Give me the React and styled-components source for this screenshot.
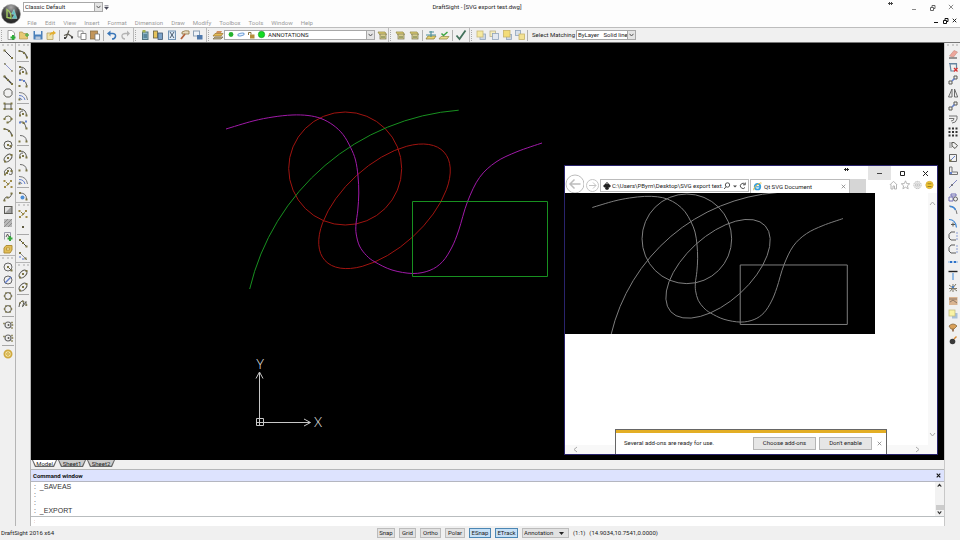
import React from 'react'
import styled, { createGlobalStyle, css } from 'styled-components'

const GlobalStyle = createGlobalStyle`
  * { box-sizing: border-box; }
  body {
    margin: 0;
    background: #fdfdfd;
    color: #1c1c1c;
    font: 6px/8px Roboto, "Noto Sans", sans-serif;
  }
  button, select, input { font: inherit; color: inherit; margin: 0; }
`

/* ---------- shared parts ---------- */

const Page = styled.div`
  min-height: 100vh;
  display: flex;
  flex-direction: column;
`

const plainButton = css`
  display: flex;
  align-items: center;
  justify-content: center;
  flex: none;
  padding: 0;
  border: 0;
  background: none;
`

const ToolButton = styled.button`
  ${plainButton}
  width: 13px;
  height: 13px;
`

const Select = styled.select`
  flex: 1;
  min-width: 0;
  height: 100%;
  padding: 0;
  border: 0;
  outline: 0;
  appearance: none;
  background: none;
`

const Combo = styled.div`
  display: flex;
  align-items: center;
  flex: none;
  width: ${p => p.$width}px;
  height: 10px;
  padding-left: ${p => p.$pad || 1}px;
  border: 1px solid #a8a8a8;
  background: #fff;
`

const ComboArrow = styled.span`
  display: flex;
  align-items: center;
  justify-content: center;
  width: 8px;
  height: 100%;
  border-left: 1px solid #a8a8a8;
  background: #e4e4e4;
`

const Arrow = () => (
  <ComboArrow>
    <svg width="5" height="4" viewBox="0 0 5 4"><path d="M.5 .8 2.5 3 4.5 .8" fill="none" stroke="#555" /></svg>
  </ComboArrow>
)

/* ---------- icons ---------- */

const dark = '#5a5a54'
const olive = '#7d7644'
const blue = '#6480cc'

const Dots = ({ at, color = olive, size = 2 }) => at.map(([x, y]) => (
  <rect key={`${x}-${y}`} x={x - size / 2} y={y - size / 2} width={size} height={size} fill={color} />
))
const Stroke = ({ d, color = dark, width = 1 }) => <path d={d} fill="none" stroke={color} strokeWidth={width} />

const icons = {
  line: <><Stroke d="M2 2 10 10" color="#3c3c3c" /><Dots at={[[2.5, 2.5], [10, 10]]} /></>,
  infinite: <><Stroke d="M2 2 10 10" color="#8f97cc" /><Dots at={[[3, 3], [10, 10]]} size={1.5} /></>,
  ray: <><Stroke d="M2 2 10 10" color="#3c3c3c" width={1.2} /><Dots at={[[2.5, 2.5], [6, 6], [10, 10]]} /></>,
  polygon: <Stroke d="M4.2 2h3.6L10 4.4v3.2L7.8 10H4.2L2 7.6V4.4z" />,
  rect: <><Stroke d="M3 4h6v5H3z" /><Dots at={[[2.5, 3.5], [9.5, 9], [2.5, 9], [9.5, 3.5]]} /></>,
  hook: <><Stroke d="M2.500 6Q3 2.500 6.500 3q3 .5 3 3T6 9.500" color="#66664a" /><Dots at={[[2.5, 6], [9.5, 6], [5.5, 9.5]]} /></>,
  arc: <><Stroke d="M2 3q6.500 0 8 7" width={1.2} /><Dots at={[[2.5, 3], [7, 5], [10, 9.5]]} /></>,
  circle: <><circle cx="6" cy="6" r="4" fill="none" stroke={dark} /><Dots at={[[6, 6], [8.5, 7]]} /></>,
  ellipse: <><ellipse cx="6" cy="6" rx="4.6" ry="2.8" transform="rotate(-45 6 6)" fill="none" stroke={dark} /><Dots at={[[6, 6], [3, 9.5], [9.5, 3]]} /></>,
  ellipseArc: <><Stroke d="M3 9.500Q1 6 5 3.500T10 6 7 9" /><Dots at={[[3, 9.5], [6, 6], [9.5, 6], [5, 8]]} /></>,
  points: <><Dots at={[[2.5, 3], [6, 6], [9.5, 9], [9, 3], [3, 9]]} color="#a08c48" /><Dots at={[[4.5, 4.5], [7.5, 5], [5, 7.5]]} size={1} /></>,
  spline: <><Stroke d="M2 10Q3 5 5.500 6.500T10 2" /><Dots at={[[2.5, 9.5], [5.5, 6.5], [9.5, 2.5]]} /></>,
  gradient: <><rect x="2" y="2" width="8" height="8" fill="#a0a0a0" /><path d="M2 2h8L2 10z" fill="#e0e0e0" /><Stroke d="M2.500 2v8M2 9.500h8.500M10 2v8M2 2.500h8" /></>,
  hatch: <><rect x="2" y="2" width="8" height="8" fill="#b8b8b8" /><Stroke d="M2 6 6 2M2 10 10 2M6 10l4-4" color="#8d8d8d" /></>,
  note: <><Stroke d="M2.500 9.500v-7h6v4" color="#99a" /><Stroke d="M4 7 5.500 4 7 7" /><Stroke d="M8 6v5M5.500 8.500h5" color="#35a53b" width={2} /></>,
  region: <><path d="M2 5l2-2.500h6V7L8 10H2z" fill="#e2bd56" stroke="#b18f38" /><rect x="4.500" y="5" width="3" height="2" fill="#f8e9b0" stroke="#a68228" strokeWidth=".6" /></>,
  circlePt: <><circle cx="6" cy="6" r="4" fill="none" stroke="#666" /><Stroke d="M6 6 9.500 9.500" /><Dots at={[[6, 6], [9.5, 9.5]]} /></>,
  circleDiag: <><circle cx="6" cy="6" r="4" fill="none" stroke="#666" /><Stroke d="M3 9 9 3" color={blue} width={1.4} /></>,
  ring: <><circle cx="6" cy="6" r="3.400" fill="none" stroke={dark} /><Dots at={[[4, 3], [8, 3], [4, 9], [8, 9], [2.5, 6], [9.5, 6]]} size={1.5} /></>,
  gear: <><circle cx="6" cy="6" r="3" fill="none" stroke="#6b6b6b" strokeWidth="1.200" /><circle cx="6.500" cy="6" r="1" fill={dark} /><Dots at={[[2, 4.5], [10, 3.5], [10, 9], [10.5, 6]]} size={1.5} /></>,
  donut: <><circle cx="6" cy="6" r="3.600" fill="#f4e5a8" stroke="#cfa93f" strokeWidth="1.800" /><circle cx="6" cy="6" r="1.300" fill="none" stroke="#cda331" /></>,
  arc3: <><Stroke d="M3 3Q9.500 3 9.500 10M3 9Q2 5 6 5" /><Dots at={[[3, 3], [9.5, 9.5], [3, 9.5], [6, 8]]} /></>,
  arcBlue: <><Stroke d="M2.500 3h3q4 1.500 4.500 6" /><Dots at={[[3, 3], [7, 4]]} color={blue} /><Dots at={[[2.5, 9], [9.5, 9.5]]} /></>,
  arcDouble: <><Stroke d="M2 2.500q7.500 0 8.500 7.500" color="#808080" /><Stroke d="M2 5.500q5 0 6 4.500M2 8q2.500 0 3 2" color={blue} /><Dots at={[[2.5, 9.5]]} /></>,
  arcTan: <><Stroke d="M3 3h3.500q2 3 3 7" /><Dots at={[[3, 3.5], [9, 2.5]]} color={blue} /><Dots at={[[6.5, 4], [9.5, 9.5]]} /></>,
  arcOpen: <><Stroke d="M3 3.500Q9 3.500 9.500 9" color="#6b6b6b" /><Dots at={[[2.5, 9.5], [9.5, 9.5]]} /></>,
  arcFill: <><Stroke d="M3 3Q9.500 3 9.500 9" color="#6b6b6b" /><circle cx="5.500" cy="7.500" r="2" fill="#4d8fd8" /><Dots at={[[3, 3], [9.5, 9.5]]} /></>,
  point: <Dots at={[[6, 6]]} color="#5e5a40" />,
  diag: <><Stroke d="M2.500 2.500 10 10" color="#3c3c3c" /><Dots at={[[3, 3], [6, 6], [9.5, 9.5]]} /></>,
  diagBlue: <><Stroke d="M2.500 2.500 10 10" color="#8f8f8f" /><Dots at={[[3, 3], [8.5, 8.5]]} /><Dots at={[[3, 7], [6, 9]]} color={blue} size={1.5} /></>,
  curveN: <><Stroke d="M2 10Q2 5 5 4T6 8 9 4.500V9" /><Dots at={[[3, 6], [6, 4.5], [9.5, 8]]} size={1.5} /></>,

  eraser: <><path d="M2.500 8 7 2.500 10.500 4 6.500 9z" fill="#eda79c" stroke="#c58a80" strokeWidth=".6" /><Stroke d="M2 10h8" color="#3c3c3c" /></>,
  discard: <><Stroke d="M2.500 3h7v5M3 3l1 7h3M2 2.500h8" color="#6585a0" width={1.2} /><Stroke d="M7 7l3.500 3.500M10.500 7 7 10.500" color="#d43030" width={1.3} /></>,
  copy: <><Stroke d="M2 7h3v3H2zM7 2h3v3H7z" /><Stroke d="M5 7 7.500 4.500" color={blue} width={1.6} /></>,
  mirror: <Stroke d="M5 2v8H1.500zM7.500 2v8h3.200z" color="#6b6b6b" />,
  offset: <Stroke d="M2 3h8v3q-1 4-5 4M2 5.500h5q0 2.500-3 2.500" color="#757575" />,
  pattern: <Dots at={[[2.5, 2.5], [6, 2.5], [9.5, 2.5], [2.5, 6], [6, 6], [9.5, 6], [2.5, 9.5], [6, 9.5], [9.5, 9.5]]} color="#333" />,
  rotate: <><Stroke d="M2 4h3M2 6h2M2 8h3" color="#888" /><Stroke d="M5 3.500h2L10.500 6.500 8 9.500 5 7z" /></>,
  scale: <><Stroke d="M2.500 2.500h7v7h-7z" color="#666" /><Stroke d="M3.500 8.500 8 4" color={blue} /><Dots at={[[3.5, 8.5]]} /></>,
  stretch: <><Stroke d="M2.500 2v7.500h8V7H5V2z" color="#757575" /><Dots at={[[4, 8]]} color={blue} /></>,
  thinLine: <><Stroke d="M2 10 10 2" color="#8186c0" /><Dots at={[[5, 7]]} color="#444" size={1.5} /></>,
  explode: <><Stroke d="M4 3h5v2H4zM2 6h4v4H2z" color="#6f6db4" /><circle cx="8.500" cy="8" r="2" fill="none" stroke="#666" /></>,
  trim: <><Stroke d="M2 2q7 0 8 8" color="#777" /><Stroke d="M3 2.500q4 0 5.500 3.500" color="#3d86d6" width={1.5} /></>,
  trimPt: <><Stroke d="M2 2.500q6.500 0 7.500 8" color="#3d86d6" width={1.2} /><Stroke d="M6 5.500v4M4 7.500h4" /></>,
  chamfer: <><Stroke d="M8 2H4L2 4.500V8l2 2h5" color="#5b5b5b" /><Dots at={[[10, 3], [10, 6], [10, 9]]} color={blue} size={1.2} /></>,
  split: <><Stroke d="M1 6h10" color="#7fb0e6" /><Dots at={[[4, 6], [8, 6]]} color="#2e71c8" /></>,
  weld: <><Stroke d="M1.500 2.500h9" color="#222" width={1.4} /><Stroke d="M6 4v7" color="#6ba4e0" width={1.4} /></>,
  burst: <><Stroke d="M2 3l8 6M3 9.500 9 2M6 2v8M2 6.500h8" color="#7c7868" /><Dots at={[[6, 5]]} color="#4a7fc0" /></>,
  image: <><rect x="2" y="2" width="8.500" height="8" fill="#d9b491" /><Stroke d="M2 4h8M3 7l3-2 4 3" color="#8b7665" /></>,
  order: <><rect x="5" y="5" width="5.500" height="5.500" fill="#a8bfd8" /><rect x="2" y="2" width="6" height="6" fill="#f9f3a4" stroke="#c5be80" strokeWidth=".8" /></>,
  brush: <><path d="M2 5q4-4 8 0L7 8H4z" fill="#d8a05a" stroke="#8a6a3c" strokeWidth=".8" /><Stroke d="M6 8v2.500" color="#8b5f3a" width={1.6} /></>,
  bomb: <><circle cx="5.500" cy="7.500" r="2.800" fill="#3a3a3a" /><Stroke d="M7 5 9.500 2.500" color="#d88a35" width={1.5} /></>,

  newFile: <><path d="M3 1.500h4L9.500 4v6.500H3z" fill="#fff" stroke="#a0a0a0" /><Stroke d="M8 6v5M5.500 8.500h5" color="#2fae3b" width={2} /></>,
  open: <><path d="M1.500 3h3l1 1.500h4V10h-8z" fill="#e7c974" stroke="#b89d56" strokeWidth=".8" /><path d="M7 6h4M9 4v4" stroke="#5fae50" strokeWidth="1.400" /></>,
  save: <><rect x="1.500" y="2" width="9" height="8.500" fill="#4a80ba" /><rect x="3" y="2" width="6" height="3.500" fill="#e9f0f8" /><rect x="3.500" y="7.500" width="5" height="3" fill="#b9c8da" /></>,
  exportFile: <><path d="M2 4h6v6.500H2z" fill="#f0e3ac" stroke="#b5a060" strokeWidth=".8" /><path d="M4.500 7q0-4 3.500-4V1.500L11 4 8 6V5q-2 0-3.500 2" fill="#e3ae2e" /></>,
  cut: <><Stroke d="M7 1.500 4 9M2 6.500 6 5l5 3.500" color="#5c5a50" width={1.2} /><Dots at={[[3, 9], [10, 8.5]]} color="#444" /></>,
  copyDoc: <><path d="M2 2h5v6H2z" fill="#fff" stroke="#999" /><path d="M5 4.500h5v6H5z" fill="#fff" stroke="#888" /></>,
  paste: <><rect x="1.500" y="2" width="7" height="8" fill="#c2955a" stroke="#8a7048" strokeWidth=".8" /><path d="M6 5h4.500v6H6z" fill="#fff" stroke="#777" strokeWidth=".8" /></>,
  undo: <><Stroke d="M3 4.500h4q3 .5 2.500 3T6 10" color="#3a76b8" width={1.5} /><path d="M1 4.500 4.500 1.500v6z" fill="#3a76b8" /></>,
  redo: <><Stroke d="M9 4.500H6q-3.500.5-3 3T6 10" color="#b3b3b3" width={1.3} /><path d="M11 4.500 8 1.500v6z" fill="#b3b3b3" /></>,
  props: <><rect x="3.500" y="3" width="5.500" height="7.500" fill="#8fb7c8" stroke="#527480" /><rect x="3.500" y="1" width="3" height="2.500" fill="#a8b350" /><Stroke d="M4.500 6h3.500M4.500 8h3.500" color="#265a75" /></>,
  palettes: <><rect x="1.500" y="2" width="4" height="7" fill="#e5c25b" stroke="#67603f" strokeWidth=".8" /><rect x="6" y="4" width="4.500" height="6.500" fill="#7ca2c8" stroke="#415770" strokeWidth=".8" /></>,
  design: <><rect x="2.500" y="2" width="7" height="8.500" fill="#dce9f5" stroke="#7394b4" /><Stroke d="M4 3l4 6M8 3 4 9" color="#4b5c70" /></>,
  painter: <><path d="M3 3q3-2 7-1v3H3z" fill="#e8dcc0" stroke="#8b7344" strokeWidth=".8" /><Stroke d="M2 10 6 5" color="#b4623a" width={1.8} /></>,
  refs: <><rect x="1.500" y="2" width="6" height="5" fill="#eef3f9" stroke="#8da1b6" /><rect x="5" y="6" width="5.500" height="4.500" fill="#4f79ac" /></>,
  layers: <><path d="M1 7h8l2-2.500H3z" fill="#e3ba56" stroke="#9a7326" strokeWidth=".7" /><path d="M1 10h8l2-2H3z" fill="#bfb28a" stroke="#77694a" strokeWidth=".7" /><path d="M4 4h5l1-2H5z" fill="#cf8f5d" /></>,
  layerA: <><path d="M2 3h7l1.500 2.500H3.500z" fill="#e4d371" stroke="#948b4b" strokeWidth=".8" /><rect x="4" y="5" width="6" height="5" fill="#d8cd8e" stroke="#85805c" strokeWidth=".8" /><Stroke d="M5 8h4" color="#6b7a45" /></>,
  layerB: <><path d="M1 10h8l2-3H3z" fill="#e8d36b" stroke="#8d8142" strokeWidth=".8" /><Stroke d="M1 6h10M4 3h5M6 2v6" color="#4f929a" width={1.2} /></>,
  layerC: <><path d="M1 10h8l2-2.500H3z" fill="#e8dc8b" stroke="#9d9152" strokeWidth=".8" /><Stroke d="M3.500 4.500 5.500 6.500 9.500 3" color="#3fa644" width={1.5} /></>,
  check: <Stroke d="M1.500 6.500 4.500 10 10.500 1.500" color="#42715b" width={1.8} />,
  orderA: <><rect x="5" y="5" width="5.500" height="5.500" fill="#ccd6e4" stroke="#8fa3bc" strokeWidth=".8" /><rect x="2" y="2" width="6" height="6" fill="#f6e9a0" stroke="#c8b878" strokeWidth=".8" /></>,
  orderB: <><rect x="2" y="2" width="5.500" height="5.500" fill="#f6eebd" stroke="#b9b08a" strokeWidth=".8" /><rect x="4.500" y="4.500" width="6" height="6" fill="#e2e8f0" stroke="#8fa3bc" strokeWidth=".8" /></>,
  orderC: <><rect x="5.500" y="5.500" width="5" height="5" fill="#ccd6e4" stroke="#8fa3bc" strokeWidth=".8" /><rect x="2.500" y="1.500" width="6.500" height="6.500" fill="#f3dc78" stroke="#c8b468" strokeWidth=".8" /></>,
  orderD: <><rect x="1.500" y="1.500" width="5" height="5" fill="#d8e0ea" stroke="#8fa3bc" strokeWidth=".8" /><rect x="5" y="5" width="5.500" height="5.500" fill="#f3e294" stroke="#c8b468" strokeWidth=".8" /></>,
}

const Icon = ({ name }) => <svg width="12" height="12" viewBox="0 0 12 12">{icons[name]}</svg>

const Tools = ({ names }) => names.map((name, i) => {
  if (name === '|') return <Separator key={i} />
  return <ToolButton key={i} type="button" aria-label={name}><Icon name={name} /></ToolButton>
})

const glyphs = {
  min: 'M1 5.500h4',
  dash: 'M1 3.500h5',
  max: 'M1.500 1.500h4v4h-4z',
  restore: 'M1.500 3.500h3v3h-3zM3 3.500v-2h3v3H4.500',
  close: 'M1 1 6 6M6 1 1 6',
  resize: 'M1 3.500h5M2.500 2v3M4.500 2v3',
  left: 'M5 1 2 3.500 5 6',
  right: 'M2 1 5 3.500 2 6',
  up: 'M1 5 3.500 2 6 5',
  down: 'M1 2 3.500 5 6 2',
}

const Glyph = ({ name, size = 7, color = '#333', width = 1 }) => (
  <svg width={size} height={size} viewBox="0 0 7 7">
    <path d={glyphs[name]} fill="none" stroke={color} strokeWidth={width} />
  </svg>
)

/* ---------- header ---------- */

const Header = styled.header`
  display: grid;
  grid-template-columns: 22px 1fr;
  grid-template-rows: 14px 13px;
  background: #fdfdfd;
`

const LogoButton = styled.button`
  ${plainButton}
  grid-row: span 2;
`

const TitleRow = styled.div`
  display: flex;
  align-items: center;
  padding-left: 1px;
`

const Title = styled.h1`
  flex: 1;
  margin: 0;
  padding-right: 42px;
  font-size: 6px;
  font-weight: 400;
  text-align: center;
`

const ResizeMark = styled.span`
  display: flex;
  align-self: flex-start;
  margin-right: ${p => p.$gap}px;
`

const WindowButtons = styled.div`
  display: flex;
  align-items: center;
  gap: ${p => p.$gap}px;
  padding-right: ${p => p.$end}px;
`

const WinButton = styled.button`
  ${plainButton}
  width: 7px;
  height: 8px;
`

const MenuRow = styled.nav`
  display: flex;
  align-items: center;
  justify-content: space-between;
`

const Menu = styled.div`
  display: flex;
  gap: 8px;
  padding: 4px 0 0 5px;
`

const MenuItem = styled.button`
  ${plainButton}
  min-width: 10px;
  color: #9a9a9a;
`

const Toolbar = styled.div`
  display: flex;
  height: 16px;
  border-top: 1px solid #bdbdbd;
  border-bottom: 1px solid #777;
  background: #f0f0f0;
`

const ToolGroup = styled.div`
  display: flex;
  align-items: center;
  justify-content: space-between;
  width: ${p => p.$width}px;
  padding-right: 1px;
  border-right: ${p => (p.$last ? 0 : 1)}px solid #bbb;
`

const Grip = styled.span`
  flex: none;
  width: 2px;
  height: 11px;
  margin: 0 1px;
  border-left: 1px dotted #aaa;
`

const Separator = styled.span`
  flex: none;
  width: 1px;
  height: 11px;
  margin: 0 1px;
  background: #b0b0b0;
`

const MatchLabel = styled.label`
  margin: 0 1px 0 3px;
  white-space: nowrap;
`

const menus = ['File', 'Edit', 'View', 'Insert', 'Format', 'Dimension', 'Draw', 'Modify', 'Toolbox', 'Tools', 'Window', 'Help']

const Logo = () => (
  <svg width="20" height="20" viewBox="0 0 20 20">
    <defs>
      <radialGradient id="ball" cx=".5" cy=".15" r=".9">
        <stop offset="0" stopColor="#aaa" />
        <stop offset=".45" stopColor="#484848" />
        <stop offset="1" stopColor="#1c1c1c" />
      </radialGradient>
    </defs>
    <circle cx="10" cy="10" r="9.500" fill="url(#ball)" stroke="#999" strokeWidth=".6" />
    <path d="M6 5.500v8l4 .8q.500-6-4-8.800z" fill="none" stroke="#a2ca62" strokeWidth="1.400" />
    <path d="M13 5.500 10.500 10l3 .5-2.500 4h5z" fill="#5dbfc0" stroke="#b8e1dc" strokeWidth=".5" />
  </svg>
)

const LayerIcons = () => (
  <svg width="41" height="10" viewBox="0 0 41 10">
    <circle cx="4" cy="4.500" r="2.400" fill="#25b32f" />
    <ellipse cx="14" cy="4.500" rx="3.200" ry="1.300" fill="#e8f2ff" stroke="#6f9fd6" transform="rotate(-12 14 4.500)" />
    <rect x="23" y="4.500" width="4.500" height="4" fill="#b58e3b" />
    <path d="M21.500 5V2.500h2.500v2" fill="none" stroke="#8a7440" />
    <circle cx="34.500" cy="4.500" r="3.200" fill="#13dc22" stroke="#198f20" strokeWidth=".6" />
  </svg>
)

const AppHeader = () => (
  <Header>
    <LogoButton type="button" aria-label="DraftSight"><Logo /></LogoButton>
    <TitleRow>
      <Combo $width={80}>
        <Select aria-label="Workspace"><option>Classic Default</option></Select>
        <Arrow />
      </Combo>
      <svg width="6" height="5" viewBox="0 0 6 5"><path d="M1.500 .5h4M1.500 2h4l-2 2.500z" fill="#445" stroke="#445" strokeWidth=".5" /></svg>
      <Title>DraftSight - [SVG export test.dwg]</Title>
      <ResizeMark $gap={17}><Glyph name="resize" color="#444" /></ResizeMark>
      <WindowButtons $gap={11} $end={6}>
        <WinButton type="button" aria-label="Minimize"><Glyph name="min" color="#888" /></WinButton>
        <WinButton type="button" aria-label="Restore"><Glyph name="restore" color="#666" /></WinButton>
        <WinButton type="button" aria-label="Close"><Glyph name="close" size={6} color="#777" /></WinButton>
      </WindowButtons>
    </TitleRow>
    <MenuRow>
      <Menu>{menus.map(m => <MenuItem key={m} type="button">{m}</MenuItem>)}</Menu>
      <WindowButtons $gap={2} $end={2}>
        <WinButton type="button" aria-label="Minimize drawing"><Glyph name="min" color="#111" /></WinButton>
        <WinButton type="button" aria-label="Restore drawing"><Glyph name="restore" color="#111" /></WinButton>
        <WinButton type="button" aria-label="Close drawing"><Glyph name="close" size={5} color="#111" width={1.3} /></WinButton>
      </WindowButtons>
    </MenuRow>
  </Header>
)

const MainToolbar = () => (
  <Toolbar>
    <ToolGroup $width={134}>
      <Grip />
      <Tools names={['newFile', 'open', 'save', 'exportFile', '|', 'cut', 'copyDoc', 'paste', '|', 'undo', 'redo']} />
    </ToolGroup>
    <ToolGroup $width={73}>
      <Grip />
      <Tools names={['props', 'palettes', 'design', 'painter', 'refs']} />
    </ToolGroup>
    <ToolGroup $width={182}>
      <Grip />
      <Tools names={['layers']} />
      <Combo $width={151} $pad={2}>
        <LayerIcons />
        <Select aria-label="Layer"><option>ANNOTATIONS</option></Select>
        <Arrow />
      </Combo>
      <Tools names={['layerA']} />
    </ToolGroup>
    <ToolGroup $width={81}>
      <Grip />
      <Tools names={['layerA', 'layerA', '|', 'layerB', 'layerC', '|', 'check']} />
    </ToolGroup>
    <ToolGroup $width={165} $last>
      <Grip />
      <Tools names={['orderA', 'orderB', 'orderC', 'orderD', '|']} />
      <MatchLabel htmlFor="match">Select Matching</MatchLabel>
      <Combo $width={60}>
        <Select id="match"><option>ByLayer{'\u00a0\u00a0\u00a0'}Solid line</option></Select>
        <Arrow />
      </Combo>
    </ToolGroup>
  </Toolbar>
)

/* ---------- side docks ---------- */

const Workspace = styled.div`
  display: flex;
  flex: 1;
  background: #f0f0f0;
`

const Dock = styled.aside`
  flex: none;
  width: ${p => p.$width}px;
  border-right: ${p => (p.$last ? 0 : 1)}px solid #b5b5b5;
`

const DockSection = styled.div`
  display: flex;
  flex-direction: column;
  align-items: center;
  & + & { border-top: 1px solid #b5b5b5; }
`

const DockGrip = styled.span`
  width: 11px;
  height: 2px;
  margin: 1px 0;
  border-top: 2px dotted #ccc;
`

const DockSeparator = styled.span`
  width: 12px;
  height: 1px;
  margin: 1px 0;
  background: #a8a8a8;
`

const DockBar = ({ sections, width, last }) => (
  <Dock $width={width} $last={last}>
    {sections.map((names, i) => (
      <DockSection key={i}>
        <DockGrip />
        {names.map((name, j) => name === '|'
          ? <DockSeparator key={j} />
          : <ToolButton key={j} type="button" aria-label={name}><Icon name={name} /></ToolButton>)}
      </DockSection>
    ))}
  </Dock>
)

const drawTools = [
  ['line', 'infinite', 'ray', 'polygon', 'rect', 'hook', 'arc', 'circle', 'ellipse', 'ellipseArc', 'points', 'spline', 'gradient', 'hatch', 'note', 'region'],
  ['circlePt', 'circleDiag', '|', 'ring', 'ring', '|', 'gear', 'gear', '|', 'donut'],
]

const arcTools = [
  ['arc', '|', 'arc3', 'arcBlue', 'arcDouble', '|', 'arc3', 'arcTan', 'arcOpen', '|', 'arc3', 'arcOpen', 'arcDouble', '|', 'arcFill'],
  ['points', 'point', '|', 'diag', 'diagBlue'],
  ['ellipse', 'ellipse', '|', 'curveN'],
]

const modifyTools = [
  ['eraser', 'discard', 'copy', 'mirror', 'copy', 'offset', 'pattern', 'rotate', 'scale', 'stretch', 'thinLine', 'explode',
    'trim', 'trimPt', 'chamfer', 'chamfer', 'split', 'weld', 'burst', 'image', 'order', 'brush', 'bomb'],
]

/* ---------- drawing ---------- */

const splinePoints = [
  [195, 87], [222, 79], [242, 75], [261, 73], [277, 73.5], [290, 76.5], [302, 83], [312, 92.5], [319.5, 105.3],
  [324.5, 118], [327, 134], [327.8, 151], [326.8, 168], [325, 182], [325.2, 192], [328.5, 204], [335.5, 213.5],
  [344, 220], [361, 228], [382, 231.5], [399, 228.3], [411.5, 219.7], [421, 205], [427.8, 188],
  [436.5, 159.7], [448.5, 135.5], [465, 120], [486, 109.7], [511, 101],
]

// Catmull-Rom through the fit points, written as cubic beziers
const splinePath = points => points.slice(0, -1).reduce((d, p1, i) => {
  const p0 = points[i - 1] || p1
  const p2 = points[i + 1]
  const p3 = points[i + 2] || p2
  const c1 = [p1[0] + (p2[0] - p0[0]) / 6, p1[1] + (p2[1] - p0[1]) / 6]
  const c2 = [p2[0] - (p3[0] - p1[0]) / 6, p2[1] - (p3[1] - p1[1]) / 6]
  return `${d}C${c1} ${c2} ${p2}`
}, `M${points[0]}`)

const Entities = ({ mono }) => (
  <g fill="none">
    <circle cx="314.200" cy="126.500" r="56.500" stroke={mono || '#a01410'} vectorEffect="non-scaling-stroke" />
    <ellipse cx="353.500" cy="164.300" rx="80.500" ry="41.600" transform="rotate(-42.300 353.500 164.300)" stroke={mono || '#a01410'} vectorEffect="non-scaling-stroke" />
    <path d="M218.700 247A233 233 0 0 1 427.700 68.200" stroke={mono || '#189020'} vectorEffect="non-scaling-stroke" />
    <path d={splinePath(splinePoints)} stroke={mono || '#a01aa8'} vectorEffect="non-scaling-stroke" />
    <rect x="381.500" y="159.500" width="135" height="75" stroke={mono || '#189020'} vectorEffect="non-scaling-stroke" />
  </g>
)

const Center = styled.main`
  display: flex;
  flex: 1;
  flex-direction: column;
  min-width: 0;
  border-right: 1px solid #c8c8c8;
`

const Canvas = styled.section`
  position: relative;
  flex: 1;
  min-height: 417px;
  overflow: hidden;
  background: #000;
`

const AxisLabel = styled.text`
  font: 300 13px Lato, sans-serif;
  fill: #eee;
  text-anchor: middle;
`

const Model = () => (
  <svg width="540" height="410" viewBox="0 1 540 410">
    <Entities />
    <g fill="none" stroke="#c8c8c8">
      <path d="M225.500 376.500h7v7h-7zM228.500 384V330.500M225 380.500H279" />
      <path d="M225 336.500 228.500 330 232 336.500M273 377 279.500 380.500 273 384" />
    </g>
    <AxisLabel x="229" y="327">Y</AxisLabel>
    <AxisLabel x="287" y="385">X</AxisLabel>
  </svg>
)

/* ---------- browser window ---------- */

const Browser = styled.section`
  position: absolute;
  top: 122px;
  right: 6px;
  display: flex;
  flex-direction: column;
  width: 374px;
  height: 290px;
  border: 1px solid #29236b;
  background: #fff;
`

const BrowserTitle = styled.div`
  display: flex;
  justify-content: flex-end;
  height: 13px;
`

const BrowserButton = styled.button`
  ${plainButton}
  width: 23px;
  height: 14px;
  background: ${p => (p.$hot ? '#e4e4e4' : 'none')};
`

const NavRow = styled.div`
  display: flex;
  align-items: flex-end;
  height: 14px;
`

const RoundButton = styled.button`
  ${plainButton}
  width: ${p => p.$size}px;
  height: ${p => p.$size}px;
`

const Address = styled.div`
  display: flex;
  align-items: center;
  width: 149px;
  height: 13px;
  margin-bottom: 1px;
  padding: 0 1px 0 2px;
  border: 1px solid #bbb;
`

const AddressInput = styled.input`
  flex: 1;
  min-width: 0;
  padding: 0 0 0 1px;
  border: 0;
  outline: 0;
  background: none;
`

const BrowserTab = styled.div`
  display: flex;
  align-items: center;
  gap: 2px;
  width: 100px;
  height: 14px;
  margin-left: 1px;
  padding: 0 2px;
  border: 1px solid #bbb;
  border-bottom: 0;
`

const TabTitle = styled.span`
  flex: 1;
`

const NewTab = styled.button`
  ${plainButton}
  width: 16px;
  height: 14px;
  background: #d6d6d6;
`

const BrowserTools = styled.div`
  display: flex;
  align-items: center;
  justify-content: flex-end;
  flex: 1;
  height: 14px;
  padding: 0 3px 2px 0;
`

const Viewport = styled.div`
  position: relative;
  display: flex;
  flex: 1;
`

const Doc = styled.div`
  display: flex;
  flex: 1;
  flex-direction: column;
  justify-content: space-between;
  min-width: 0;
`

const DocImage = styled.div`
  width: 310px;
  height: 141px;
  background: #000;
`

const VScroll = styled.div`
  display: flex;
  flex-direction: column;
  align-items: center;
  justify-content: space-between;
  width: 9px;
  padding: 7px 0 16px;
  background: #f8f8f8;
`

const HScroll = styled.div`
  display: flex;
  align-items: center;
  justify-content: space-between;
  height: 9px;
  padding: 0 7px;
  background: #f8f8f8;
`

const Notice = styled.div`
  position: absolute;
  bottom: 0;
  left: 50px;
  display: flex;
  align-items: center;
  gap: 3px;
  width: 272px;
  height: 25px;
  padding: 0 2px 0 8px;
  border: 1px solid #666;
  border-bottom: 0;
  background: linear-gradient(#e3ae25 3px, #fff 3px);
`

const NoticeText = styled.span`
  flex: 1;
  padding-top: 2px;
`

const NoticeButton = styled.button`
  ${plainButton}
  width: ${p => p.$width}px;
  height: 13px;
  margin-top: 2px;
  border: 1px solid #b5b5b5;
  background: #e6e6e6;
`

const Dismiss = styled.button`
  ${plainButton}
  width: 9px;
  height: 13px;
  margin-top: 3px;
`

const InternetExplorer = () => (
  <Browser>
    <BrowserTitle>
      <ResizeMark $gap={18}><Glyph name="resize" color="#222" /></ResizeMark>
      <BrowserButton type="button" $hot aria-label="Minimize"><Glyph name="dash" color="#444" /></BrowserButton>
      <BrowserButton type="button" aria-label="Maximize"><Glyph name="max" color="#222" /></BrowserButton>
      <BrowserButton type="button" aria-label="Close"><Glyph name="close" color="#222" /></BrowserButton>
    </BrowserTitle>
    <NavRow>
      <RoundButton type="button" aria-label="Back" $size={19}>
        <svg width="19" height="19" viewBox="0 0 19 19" fill="none" stroke="#bdbdbd">
          <circle cx="10" cy="10" r="9" /><path d="M15.500 10H6M9.500 5.500 5 10 9.500 14.500" strokeWidth="1.500" />
        </svg>
      </RoundButton>
      <RoundButton type="button" aria-label="Forward" $size={16}>
        <svg width="13" height="13" viewBox="0 0 13 13" fill="none" stroke="#c4c4c4">
          <circle cx="6.500" cy="6.500" r="6" /><path d="M3 6.500h7M7 3.500l3 3-3 3" />
        </svg>
      </RoundButton>
      <Address>
        <svg width="8" height="8" viewBox="0 0 8 8"><path d="M4 0 8 4 6.500 5.500 5.500 5.500 6 7 4 8 2 7 2.500 5.500 1.500 5.500 0 4z" fill="#222" /><path d="M3.200 1.800 4 1l.8.800L4 2.300z" fill="#fff" /></svg>
        <AddressInput aria-label="Address" defaultValue="C:\Users\PByrn\Desktop\SVG export text." />
        <svg width="24" height="8" viewBox="0 0 24 8" fill="none" stroke="#555">
          <circle cx="4.500" cy="3" r="2.200" /><path d="M3 4.700 1.200 7" />
          <path d="M10 3.500h4l-2 2z" fill="#444" stroke="none" />
          <path d="M22 2.300A2.600 2.600 0 1 0 22 5.500M22.300.5v2.300H20" />
        </svg>
      </Address>
      <BrowserTab>
        <svg width="9" height="9" viewBox="0 0 9 9" fill="none">
          <circle cx="4.500" cy="4.700" r="2.800" stroke="#38a0dc" strokeWidth="1.700" />
          <path d="M2.500 4.800h5" stroke="#38a0dc" strokeWidth="1.200" />
          <path d="M.7 8.200Q-.2 6 4 3T8.500 1.200" stroke="#e5bf43" />
        </svg>
        <TabTitle>Qt SVG Document</TabTitle>
        <WinButton type="button" aria-label="Close tab"><Glyph name="close" size={5} color="#777" /></WinButton>
      </BrowserTab>
      <NewTab type="button" aria-label="New tab" />
      <BrowserTools>
        <svg width="45" height="10" viewBox="0 0 45 10" fill="none" stroke="#b5b5b5">
          <path d="M.8 5 4.500 1.300 8.200 5M2 4.500V9h2V6h1.500v3h2V4.500" />
          <path d="M16.500.8l1.200 2.800 3 .2-2.300 2 .8 3-2.700-1.600-2.600 1.600.7-3-2.300-2 3-.2z" />
          <circle cx="28.500" cy="5" r="3.600" strokeDasharray="1.500 .5" /><circle cx="28.500" cy="5" r="2.200" stroke="#c8c8c8" /><circle cx="28.500" cy="5" r=".8" />
          <circle cx="40.500" cy="5" r="3.600" fill="#f1c732" stroke="#dbb038" />
          <path d="M38.500 3.800h4M38.500 6.500h4" stroke="#846c25" strokeWidth=".8" />
        </svg>
      </BrowserTools>
    </NavRow>
    <Viewport>
      <Doc>
        <DocImage>
          <svg width="310" height="141" viewBox="0 0 310 141">
            <g transform="translate(-127.300 -54.500) scale(.793)"><Entities mono="#7e7e7e" /></g>
          </svg>
        </DocImage>
        <HScroll><Glyph name="left" color="#aaa" /><Glyph name="right" color="#aaa" /></HScroll>
      </Doc>
      <VScroll><Glyph name="up" color="#aaa" /><Glyph name="down" color="#aaa" /></VScroll>
      <Notice>
        <NoticeText>Several add-ons are ready for use.</NoticeText>
        <NoticeButton type="button" $width={63}>Choose add-ons</NoticeButton>
        <NoticeButton type="button" $width={53}>Don't enable</NoticeButton>
        <Dismiss type="button" aria-label="Dismiss"><Glyph name="close" size={5} color="#777" /></Dismiss>
      </Notice>
    </Viewport>
  </Browser>
)

/* ---------- sheets and command window ---------- */

const Sheets = styled.div`
  display: flex;
  height: 9px;
  padding-left: 1px;
`

const SheetTab = styled.button`
  ${plainButton}
  position: relative;
  width: ${p => p.$width}px;
  height: 7px;
  margin-right: 1px;
  line-height: 6px;
  background: #666;
  clip-path: polygon(0 0, 100% 0, calc(100% - 3px) 100%, 3px 100%);
  isolation: isolate;
  &::before {
    content: '';
    position: absolute;
    inset: 0 1px 1px;
    z-index: -1;
    background: ${p => (p.$active ? '#fff' : '#cbcbcb')};
    clip-path: polygon(0 0, 100% 0, calc(100% - 3px) 100%, 3px 100%);
  }
`

const Command = styled.section`
  border-top: 1px solid #b4b6b8;
  background: #fff;
`

const CommandTitle = styled.div`
  display: flex;
  align-items: center;
  justify-content: space-between;
  height: 12px;
  padding: 0 2px;
  border-bottom: 1px solid #b4b6c0;
  background: #dde3fe;
  font-weight: 700;
  color: #111;
`

const History = styled.div`
  display: flex;
  justify-content: space-between;
  height: 35px;
  border-bottom: 1px solid #b9bdbf;
`

const Log = styled.pre`
  margin: 0;
  padding: 1px 3px;
  font: 7px/8px "Liberation Sans", Arial, sans-serif;
  color: #333;
`

const LogScroll = styled.div`
  display: flex;
  flex-direction: column;
  align-items: center;
  width: 9px;
  padding: 1px 0;
  background: #f2f2f2;
`

const Thumb = styled.span`
  width: 8px;
  height: 5px;
  margin-top: auto;
  background: #ccc;
`

const Prompt = styled.label`
  display: flex;
  height: 9px;
  padding-left: 3px;
  color: #777;
`

const PromptInput = styled.input`
  flex: 1;
  padding: 0;
  border: 0;
  outline: 0;
`

/* ---------- status bar ---------- */

const StatusBar = styled.footer`
  display: grid;
  grid-template-columns: 377px auto;
  justify-content: start;
  align-items: center;
  height: 15px;
  background: #f0f0f0;
  border-bottom: 1px solid #fdfdfd;
`

const StatusText = styled.span`
  padding-left: ${p => (p.$first ? 1 : 0)}px;
`

const StatusTools = styled.div`
  display: flex;
  align-items: center;
  gap: 4px;
`

const Toggle = styled.button`
  ${plainButton}
  width: ${p => p.$width}px;
  height: 10px;
  border: 1px solid ${p => (p.$on ? '#4c87b4' : '#bcbcbc')};
  background: ${p => (p.$on ? '#c6e0f6' : '#e2e2e2')};
`

const ScaleCombo = styled(Combo)`
  border-color: #bcbcbc;
  background: #e2e2e2;
  padding-right: 4px;
`

const toggles = [['Snap', 18], ['Grid', 17], ['Ortho', 21], ['Polar', 20], ['ESnap', 22, true], ['ETrack', 23, true]]

export default function App() {
  return (
    <Page>
      <GlobalStyle />
      <AppHeader />
      <MainToolbar />
      <Workspace>
        <DockBar sections={drawTools} width={16} />
        <DockBar sections={arcTools} width={15} />
        <Center>
          <Canvas>
            <Model />
            <InternetExplorer />
          </Canvas>
          <Sheets>
            <SheetTab type="button" $width={25} $active>Model</SheetTab>
            <SheetTab type="button" $width={28}>Sheet1</SheetTab>
            <SheetTab type="button" $width={28}>Sheet2</SheetTab>
          </Sheets>
          <Command>
            <CommandTitle>
              Command window
              <WinButton type="button" aria-label="Close command window"><Glyph name="close" size={5} color="#111" width={1.5} /></WinButton>
            </CommandTitle>
            <History>
              <Log>{':  _SAVEAS\n:\n:\n:  _EXPORT'}</Log>
              <LogScroll>
                <Glyph name="up" size={5} width={1.5} />
                <Thumb />
                <Glyph name="down" size={5} width={1.5} />
              </LogScroll>
            </History>
            <Prompt>:<PromptInput aria-label="Command" /></Prompt>
          </Command>
        </Center>
        <DockBar sections={modifyTools} width={15} last />
      </Workspace>
      <StatusBar>
        <StatusText $first>DraftSight 2016 x64</StatusText>
        <StatusTools>
          {toggles.map(([name, width, on]) => (
            <Toggle key={name} type="button" $width={width} $on={on} aria-pressed={!!on}>{name}</Toggle>
          ))}
          <ScaleCombo $width={47}>
            <Select aria-label="Annotation scale"><option>Annotation</option></Select>
            <svg width="5" height="3" viewBox="0 0 5 3"><path d="M0 0h5L2.500 3z" fill="#222" /></svg>
          </ScaleCombo>
          <StatusText>(1:1)</StatusText>
          <StatusText>(14.9034,10.7541,0.0000)</StatusText>
        </StatusTools>
      </StatusBar>
    </Page>
  )
}
